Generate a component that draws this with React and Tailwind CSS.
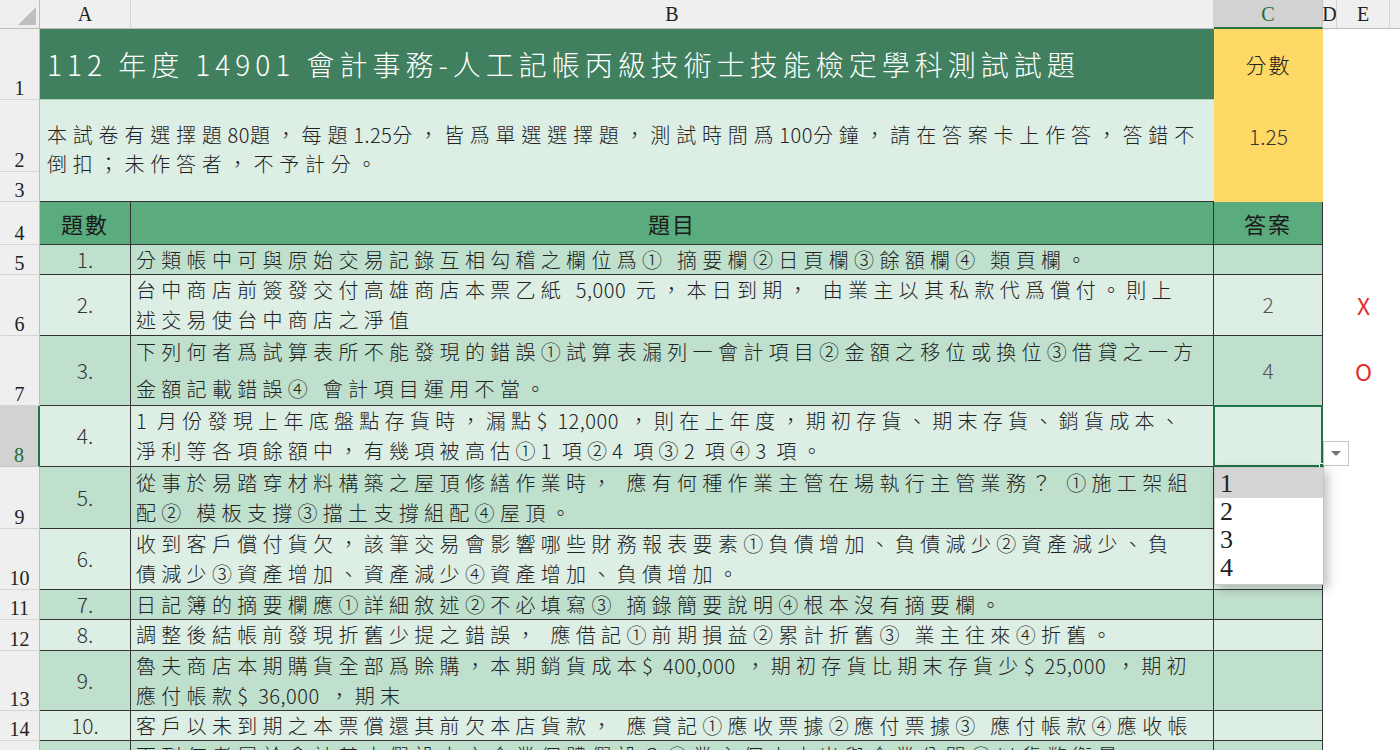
import React from "react";

const serif = "font-['Liberation_Serif','Times_New_Roman',serif]";
const cjk = "font-['Noto_Sans_CJK_TC','Noto_Sans',sans-serif]";

const qs = [
  { n: "1.", dark: true, lines: ["分類帳中可與原始交易記錄互相勾稽之欄位爲① 摘要欄②日頁欄③餘額欄④ 類頁欄。"] },
  { n: "2.", dark: false, ans: "2", mark: "X", lines: ["台中商店前簽發交付高雄商店本票乙紙 5,000 元，本日到期， 由業主以其私款代爲償付。則上", "述交易使台中商店之淨值"] },
  { n: "3.", dark: true, ans: "4", mark: "O", spread: true, lines: ["下列何者爲試算表所不能發現的錯誤①試算表漏列一會計項目②金額之移位或換位③借貸之一方", "金額記載錯誤④ 會計項目運用不當。"] },
  { n: "4.", dark: false, selected: true, lines: ["1 月份發現上年底盤點存貨時，漏點$ 12,000 ，則在上年度，期初存貨、期末存貨、銷貨成本、", "淨利等各項餘額中，有幾項被高估①1 項②4 項③2 項④3 項。"] },
  { n: "5.", dark: true, lines: ["從事於易踏穿材料構築之屋頂修繕作業時， 應有何種作業主管在場執行主管業務？ ①施工架組", "配② 模板支撐③擋土支撐組配④屋頂。"] },
  { n: "6.", dark: false, lines: ["收到客戶償付貨欠，該筆交易會影響哪些財務報表要素①負債增加、負債減少②資產減少、負", "債減少③資產增加、資產減少④資產增加、負債增加。"] },
  { n: "7.", dark: true, lines: ["日記簿的摘要欄應①詳細敘述②不必填寫③ 摘錄簡要說明④根本沒有摘要欄。"] },
  { n: "8.", dark: false, lines: ["調整後結帳前發現折舊少提之錯誤， 應借記①前期損益②累計折舊③ 業主往來④折舊。"] },
  { n: "9.", dark: true, lines: ["魯夫商店本期購貨全部爲賒購，本期銷貨成本$ 400,000 ，期初存貨比期末存貨少$ 25,000 ，期初", "應付帳款$ 36,000 ，期末"] },
  { n: "10.", dark: false, lines: ["客戶以未到期之本票償還其前欠本店貨款， 應貸記①應收票據②應付票據③ 應付帳款④應收帳"] },
  { n: "11.", dark: true, top: true, lines: ["下列何者屬於會計基本假設中之企業個體假設？①業主個人支出與企業分開②以貨幣衡量"] },
];

// digits and latin marks sit tight in the sheet, only CJK gets the wide spacing
function Mixed({ text }) {
  const parts = text.split(/([0-9$,.]+)/);
  return (
    <>
      {parts.map((p, i) =>
        /^[0-9$,.]+$/.test(p) ? (
          <span key={i} className="tracking-[0.5px]">
            {p}
          </span>
        ) : (
          <React.Fragment key={i}>{p}</React.Fragment>
        )
      )}
    </>
  );
}

function RowHead({ n, sel }) {
  return (
    <div
      className={`flex items-end justify-center pb-[1px] text-[20px] leading-none ${serif} ${
        sel
          ? "bg-[#d2d2d2] text-[#1d6b40] border-r-2 border-r-[#217346] border-b border-b-[#c4c4c4]"
          : "bg-[#efefef] text-[#222] border-r border-r-[#bdbdbd] border-b border-b-[#d4d4d4]"
      }`}
    >
      {n}
    </div>
  );
}

function Blank() {
  return <div className="bg-white" />;
}

export default function App() {
  return (
    <div className="w-[1400px] h-[750px] overflow-hidden bg-white">
      <div className="grid grid-cols-[40px_91px_1083px_109px_14px_53px_1fr] grid-rows-[29px_71px_72px_30px_43px_30px_61px_70px_61px_62px_61px_30px_31px_60px_30px_40px]">
        {/* column headers */}
        <div className="bg-[#efefef] border-r border-b border-[#bdbdbd] flex items-end justify-end p-[3px]">
          <div className="w-0 h-0 border-l-[18px] border-l-transparent border-b-[18px] border-b-[#bfbfbf]" />
        </div>
        <div className={`bg-[#efefef] border-r border-r-[#d4d4d4] border-b border-b-[#bdbdbd] flex items-center justify-center text-[20px] text-[#222] ${serif}`}>A</div>
        <div className={`bg-[#efefef] border-r border-r-[#d4d4d4] border-b border-b-[#bdbdbd] flex items-center justify-center text-[20px] text-[#222] ${serif}`}>B</div>
        <div className={`bg-[#d2d2d2] border-r border-r-[#c4c4c4] border-b-2 border-b-[#217346] flex items-center justify-center text-[20px] text-[#1d6b40] ${serif}`}>C</div>
        <div className={`bg-[#efefef] border-r border-r-[#d4d4d4] border-b border-b-[#bdbdbd] flex items-center justify-center text-[20px] text-[#222] ${serif} overflow-hidden`}>D</div>
        <div className={`bg-[#efefef] border-r border-r-[#d4d4d4] border-b border-b-[#bdbdbd] flex items-center justify-center text-[20px] text-[#222] ${serif}`}>E</div>
        <div className="bg-[#efefef] border-b border-b-[#bdbdbd]" />

        {/* row 1 */}
        <RowHead n="1" />
        <div className={`col-span-2 bg-[#41805e] border-b border-b-[#a8d2ba] flex items-center pl-[7px] text-white text-[28px] font-light tracking-[5px] whitespace-nowrap ${cjk}`}>
          112 年度 14901 會計事務-人工記帳丙級技術士技能檢定學科測試試題
        </div>
        <div className={`bg-[#ffd966] flex items-center justify-center text-[21px] font-light text-[#222] tracking-[2px] ${cjk}`}>分數</div>
        <Blank />
        <Blank />
        <Blank />

        {/* rows 2-3 */}
        <RowHead n="2" />
        <div className={`col-span-2 row-span-2 bg-[#ddeee5] border-b border-b-[#333] flex flex-col justify-center pl-[7px] pb-[4px] text-[20px] leading-[29px] text-[#222] tracking-[5.8px] whitespace-nowrap font-light ${cjk}`}>
          <div><Mixed text="本試卷有選擇題80題，每題1.25分，皆爲單選選擇題，測試時間爲100分鐘，請在答案卡上作答，答錯不" /></div>
          <div>倒扣；未作答者，不予計分。</div>
        </div>
        <div className={`row-span-2 bg-[#ffd966] flex items-center justify-center pb-[28px] text-[21px] text-[#333] font-light ${cjk}`}>1.25</div>
        <Blank />
        <Blank />
        <Blank />
        <RowHead n="3" />
        <Blank />
        <Blank />
        <Blank />

        {/* row 4: table header */}
        <RowHead n="4" />
        <div className={`bg-[#5aab7d] border-r border-b border-[#333] flex items-center justify-center text-[22px] tracking-[2px] text-[#1a1a1a] ${cjk}`}>題數</div>
        <div className={`bg-[#5aab7d] border-r border-b border-[#333] flex items-center justify-center text-[22px] tracking-[2px] text-[#1a1a1a] ${cjk}`}>題目</div>
        <div className={`bg-[#5aab7d] border-r border-b border-[#333] flex items-center justify-center text-[22px] tracking-[2px] text-[#1a1a1a] ${cjk}`}>答案</div>
        <Blank />
        <Blank />
        <Blank />

        {qs.map((q, i) => {
          const bg = q.dark ? "bg-[#bfe0cd]" : "bg-[#ddeee5]";
          return (
            <React.Fragment key={i}>
              <RowHead n={String(i + 5)} sel={q.selected} />
              <div className={`${bg} border-r border-b border-[#333] flex ${q.top ? "items-start" : "items-center"} justify-center text-[21px] font-light text-[#333] ${cjk}`}>{q.n}</div>
              <div
                className={`${bg} border-r border-b border-[#333] flex flex-col ${
                  q.spread ? "justify-between pt-[1px] pb-[1px]" : q.top ? "justify-start" : "justify-center"
                } pl-[5px] text-[20px] leading-[30px] text-[#222] tracking-[5.3px] whitespace-nowrap overflow-hidden font-light ${cjk}`}
              >
                {q.lines.map((l, j) => (
                  <div key={j}>
                    <Mixed text={l} />
                  </div>
                ))}
              </div>
              <div className={`${bg} relative border-r border-b border-[#333] flex items-center justify-center text-[21px] font-light text-[#555] ${cjk}`}>
                {q.ans}
                {q.selected && (
                  <>
                    <div className="absolute -left-[1px] -top-[1px] -right-[1px] -bottom-[1px] border-2 border-[#217346] pointer-events-none" />
                    <div className="absolute -right-[3px] -bottom-[3px] w-[6px] h-[6px] bg-[#217346] border border-white z-20" />
                    <div className="absolute -right-[27px] bottom-0 w-[26px] h-[25px] bg-white border border-[#c6c6c6] flex items-center justify-center z-20">
                      <div className="w-0 h-0 border-l-[5px] border-r-[5px] border-t-[5px] border-l-transparent border-r-transparent border-t-[#777]" />
                    </div>
                    <div className={`absolute left-0 top-full mt-[1px] w-[110px] bg-white border border-[#c6c6c6] shadow-[4px_4px_10px_rgba(0,0,0,0.25)] z-30 ${serif} text-[26px] leading-[28px] text-[#222]`}>
                      <div className="bg-[#d4d4d4] pl-[5px] pt-[2px]">1</div>
                      <div className="pl-[5px]">2</div>
                      <div className="pl-[5px]">3</div>
                      <div className="pl-[5px] pb-[2px]">4</div>
                    </div>
                  </>
                )}
              </div>
              <Blank />
              <div className={`bg-white flex items-center justify-center text-[23px] text-[#e0312f] ${cjk}`}>{q.mark}</div>
              <Blank />
            </React.Fragment>
          );
        })}
      </div>
    </div>
  );
}
